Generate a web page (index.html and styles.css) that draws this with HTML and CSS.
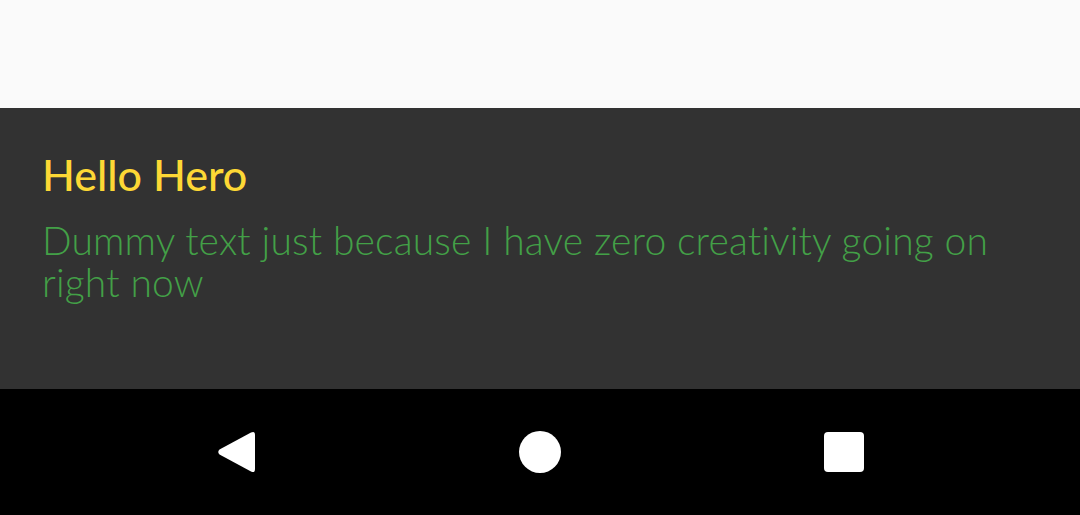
FILE: index.html
```html
<!DOCTYPE html>
<html>
<head>
<meta charset="utf-8">
<link rel="stylesheet" href="styles.css">
</head>
<body>
<div class="screen">
  <div class="top"></div>
  <div class="hero">
    <h1 class="title">Hello Hero</h1>
    <p class="text">Dummy text just because I have zero creativity going on right now</p>
  </div>
  <div class="navbar">
    <div class="nav-cell">
      <svg width="38" height="42" viewBox="0 0 38 42"><path d="M34 1.5 Q38 -0.5 38 4 L38 38 Q38 42.5 34 40.5 L2.5 23.5 Q0 21 2.5 18.5 Z" fill="#fff"/></svg>
    </div>
    <div class="nav-cell">
      <svg width="42" height="42" viewBox="0 0 42 42"><circle cx="21" cy="21" r="21" fill="#fff"/></svg>
    </div>
    <div class="nav-cell">
      <svg width="40" height="40" viewBox="0 0 40 40"><rect x="0" y="0" width="40" height="40" rx="4" fill="#fff"/></svg>
    </div>
  </div>
</div>
</body>
</html>
```

FILE: styles.css
```css
* { box-sizing: border-box; }
html, body { margin: 0; padding: 0; }
body { width: 1080px; height: 515px; overflow: hidden; font-family: "Lato", "Open Sans", sans-serif; }
.screen { display: flex; flex-direction: column; height: 515px; }
.top { height: 108px; background: #fafafa; }
.hero { height: 281px; background: #323232; padding: 42px 42px 0 42px; }
.title { margin: 0; font-size: 43px; font-weight: 500; color: #fdd835; line-height: 50px; }
.text { margin: 19px 0 0 0; font-size: 39px; font-weight: 300; color: #43a047; line-height: 42px; letter-spacing: 0.15px; }
.navbar { flex: 1; background: #000; display: flex; align-items: center; justify-content: center; gap: 204px; }
.nav-cell { width: 100px; display: flex; justify-content: center; align-items: center; }
.nav-cell svg { display: block; }
```
